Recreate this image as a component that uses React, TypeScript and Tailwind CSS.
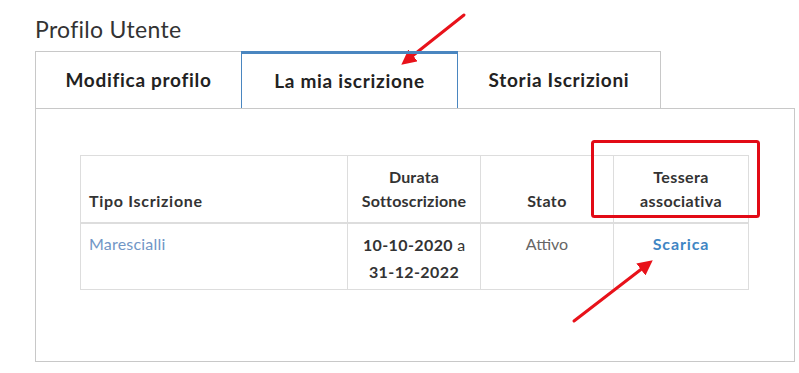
import React from 'react';

const Annotations = () => (
  <svg className="absolute inset-0 pointer-events-none" width="799" height="373" viewBox="0 0 799 373">
    <defs>
      <marker id="head" markerWidth="5" markerHeight="5" refX="3" refY="2.5" orient="auto" markerUnits="strokeWidth">
        <path d="M0,0 L5,2.5 L0,5 z" fill="#e8121a" />
      </marker>
    </defs>
    {/* arrow to active tab */}
    <line x1="464" y1="15" x2="406" y2="61" stroke="#e8121a" strokeWidth="3" strokeLinecap="round" markerEnd="url(#head)" />
    {/* box round the card header */}
    <rect x="592.5" y="141.5" width="166" height="75" rx="2" fill="none" stroke="#e20a16" strokeWidth="3" />
    {/* arrow to download link */}
    <line x1="574" y1="321" x2="648" y2="264" stroke="#e8121a" strokeWidth="3" strokeLinecap="round" markerEnd="url(#head)" />
  </svg>
);

const tabs = [
  { label: 'Modifica profilo', w: 'w-[207px]', active: false },
  { label: 'La mia iscrizione', w: 'w-[217px]', active: true },
  { label: 'Storia Iscrizioni', w: 'w-[204px]', active: false },
];

export default function App() {
  return (
    <div className="relative w-[799px] h-[373px] bg-white overflow-hidden font-['Lato',sans-serif] text-[#333]">
      <div className="pl-[35px] pt-[14px] w-[795px]">
        <h2 className="text-[23px] leading-[30px] font-normal text-[#333] tracking-[0.3px]">Profilo Utente</h2>

        {/* Tabs */}
        <div className="mt-[7px] flex">
          {tabs.map((t, i) => (
            <div
              key={t.label}
              className={`${t.w} h-[57px] pt-px flex items-center justify-center text-[19px] font-bold tracking-[0.7px] text-[#222] ${
                i > 0 ? '-ml-px' : ''
              } ${
                t.active
                  ? 'border-x border-[#4a86c0] border-t-[3px] border-t-[#4a86c0] relative z-10'
                  : 'border-x border-t border-[#c8c8c8]'
              }`}
            >
              {t.label}
            </div>
          ))}
        </div>

        {/* Panel */}
        <div className="border border-[#c8c8c8] h-[254px] pt-[46px] pl-[44px]">
          <table className="table-fixed border-collapse w-[668px] text-[16px]">
            <colgroup>
              <col className="w-[267px]" />
              <col className="w-[133px]" />
              <col className="w-[133px]" />
              <col className="w-[135px]" />
            </colgroup>
            <thead>
              <tr className="border-b-2 border-[#ddd]">
                <th className="border border-[#ddd] border-b-2 align-bottom text-left px-[8px] pt-[9px] pb-[9px] leading-[24px] font-bold tracking-[0.7px]">Tipo Iscrizione</th>
                <th className="border border-[#ddd] border-b-2 align-bottom text-center px-[6px] pt-[9px] pb-[9px] leading-[24px] font-bold tracking-[0.2px]">Durata Sottoscrizione</th>
                <th className="border border-[#ddd] border-b-2 align-bottom text-center px-[8px] pt-[9px] pb-[9px] leading-[24px] font-bold tracking-[0.4px]">Stato</th>
                <th className="border border-[#ddd] border-b-2 align-bottom text-center px-[8px] pt-[9px] pb-[9px] leading-[24px] font-bold tracking-[0.4px]">Tessera associativa</th>
              </tr>
            </thead>
            <tbody>
              <tr>
                <td className="border border-[#ddd] align-top px-[8px] pt-[8px] leading-[24px] text-[#7196c6] tracking-[0.2px]">Marescialli</td>
                <td className="border border-[#ddd] align-top text-center px-[8px] pt-[7px] pb-[4px] leading-[27px]">
                  <b className="tracking-[0.4px]">10-10-2020</b> a<br />
                  <b className="tracking-[0.4px]">31-12-2022</b>
                </td>
                <td className="border border-[#ddd] align-top text-center px-[8px] pt-[8px] leading-[24px] text-[#666]">Attivo</td>
                <td className="border border-[#ddd] align-top text-center px-[8px] pt-[8px] leading-[24px]">
                  <a className="font-bold text-[#3f86c4] tracking-[0.9px] text-[16px]">Scarica</a>
                </td>
              </tr>
            </tbody>
          </table>
        </div>
      </div>
      <Annotations />
    </div>
  );
}
